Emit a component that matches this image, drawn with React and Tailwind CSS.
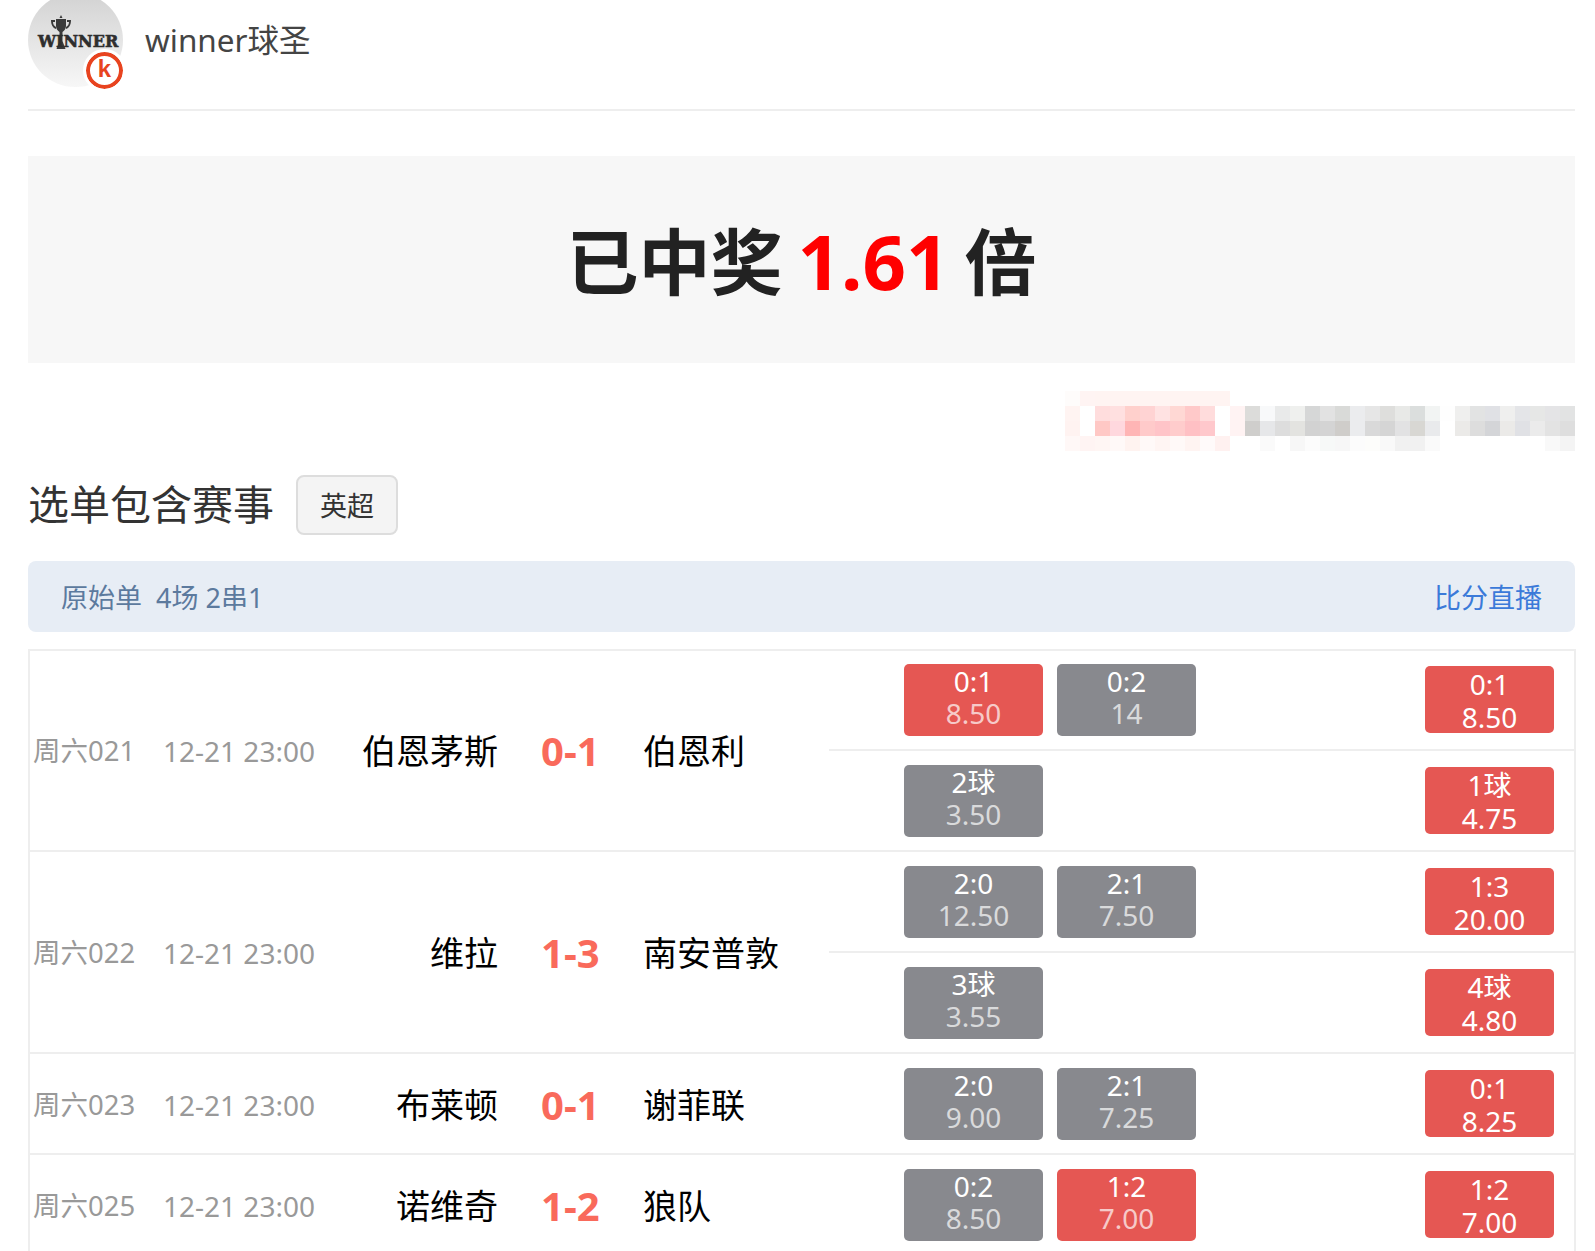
const SANS = "font-['Noto_Sans','Noto_Sans_CJK_SC',sans-serif]";

const MOSAIC = [
  ["#fefcfb","#fff4f3","#fff4f2","#fff4f2","#fff4f2","#fff4f2","#fff4f2","#fff4f2","#fff4f2","#fff4f2","#fff4f2"],
  ["#fff4f2","#fff","#ffdddd","#ffe0e0","#ffd0cc","#ffd3d3","#ffe2e2","#ffd8d4","#ffc9c9","#ffdcdc","#fff","#fff3f3","#dcdcda","#f8f9fa","#e9eaea","#eff0ee","#d6d7d7","#e2e2e2","#d9dad8","#ebecee","#e6e6e6","#dededc","#e8e9e7","#dbdedd","#f2f4f3","#fefefe","#efefee","#e2e3e3","#e0e1e5","#efefee","#e4e5e8","#e6e7e6","#e4e4e6","#e2e3e3"],
  ["#fff3f1","#fff","#ffc8c5","#ffd8de","#ffb5b5","#ffcaca","#ffc4c8","#ffcccc","#ffc0c4","#ffc8cc","#fff","#fff3f3","#cfcecc","#e6e7e9","#dddddd","#e3e3e0","#d2d2d2","#d4d4d4","#cfcdca","#ebecee","#d9d9d9","#d5d5d5","#e2e2e3","#d8d7d3","#e9eaec","#fff","#ebeae8","#dddddd","#d4d5d8","#ebeae8","#e0e1e5","#ebebeb","#e3e3e3","#dedede"],
  ["#fff8f7","#fff4f3","#fff6f4","#fff9f8","#fff3f0","#fff9f8","#fff5f3","#fff9f8","#fff4f2","#fffafa","#fff1f0","#fff","#fff","#fafafa","#fff","#f7f7f7","#fcfcfc","#f7f9f8","#f7f7f7","#fcfcfc","#fdfdfb","#f9f9f9","#f1f1f1","#f1f1f1","#fafafa","#fff","#fff","#fff","#fff","#fff","#fff","#fff","#f9f9f9","#f4f4f4"],
];

const MATCHES = [
  {
    date: "周六021", home: "伯恩茅斯", score: "0-1", away: "伯恩利",
    rows: [
      { opts: [["0:1", "8.50", true], ["0:2", "14", false]], pick: ["0:1", "8.50"] },
      { opts: [["2球", "3.50", false]], pick: ["1球", "4.75"] },
    ],
  },
  {
    date: "周六022", home: "维拉", score: "1-3", away: "南安普敦",
    rows: [
      { opts: [["2:0", "12.50", false], ["2:1", "7.50", false]], pick: ["1:3", "20.00"] },
      { opts: [["3球", "3.55", false]], pick: ["4球", "4.80"] },
    ],
  },
  {
    date: "周六023", home: "布莱顿", score: "0-1", away: "谢菲联",
    rows: [{ opts: [["2:0", "9.00", false], ["2:1", "7.25", false]], pick: ["0:1", "8.25"] }],
  },
  {
    date: "周六025", home: "诺维奇", score: "1-2", away: "狼队",
    rows: [{ opts: [["0:2", "8.50", false], ["1:2", "7.00", true]], pick: ["1:2", "7.00"] }],
  },
];

function Avatar() {
  return (
    <div className="relative -mt-[7px] h-[94px] w-[95px] shrink-0 rounded-full bg-gradient-to-b from-[#d2d2d2] to-[#f7f7f7]">
      <svg className="absolute left-[22px] top-[22px]" width="22" height="34" viewBox="0 0 22 34" fill="#3a3a3a">
        <path d="M11 0l1.500 3h-3zM6 4h10v7c0 3-2 5-3.500 6v9l3 8H6.500l3-8v-9C8 16 6 14 6 11z" />
        <path d="M5 5H1c0 5 2 8 5 9v-2c-2-1-3-3-3-5h2zM17 5h4c0 5-2 8-5 9v-2c2-1 3-3 3-5h-2z" />
      </svg>
      <span className="absolute left-[10px] top-[40px] font-['DejaVu_Serif',serif] text-[16px] font-bold leading-[18px] tracking-[0px] text-[#2e2e2e] [-webkit-text-stroke:0.6px_#2e2e2e]">
        WINNER
      </span>
      <div className="absolute left-[58px] top-[59px] flex h-[37px] w-[37px] items-center justify-center rounded-full border-[4px] border-[#e8431f] bg-white font-['Liberation_Sans',sans-serif] text-[24px] font-bold leading-none text-[#e8431f] outline-[3px] outline-white">
        <span className="-mt-[3px]">k</span>
      </div>
    </div>
  );
}

function Mosaic() {
  return (
    <svg width="510" height="60" viewBox="0 0 510 60" shapeRendering="crispEdges">
      {MOSAIC.map((row, r) =>
        row.map((c, i) => <rect key={`${r}-${i}`} x={i * 15} y={r * 15} width="15" height="15" fill={c} />)
      )}
    </svg>
  );
}

function Option({ top, bottom, on }) {
  return (
    <div className={`flex h-[72px] w-[139px] flex-col items-center justify-center rounded-[5px] pb-[6px] text-[28px] leading-[32px] ${on ? "bg-[#e55753]" : "bg-[#88898e]"}`}>
      <span className="text-white">{top}</span>
      <span className="text-white/70">{bottom}</span>
    </div>
  );
}

function Pick({ top, bottom }) {
  return (
    <div className="flex h-[67px] w-[129px] flex-col items-center justify-center rounded-[5px] bg-[#e55753] pt-[2px] text-[28px] leading-[33px] text-white">
      <span>{top}</span>
      <span>{bottom}</span>
    </div>
  );
}

function Match({ m }) {
  return (
    <div className="flex">
      <div className="flex w-[799px] shrink-0 items-center border-b-2 border-[#eeeeee] pl-[3px] text-[28px]">
        <span className="w-[130px] pt-[2px] text-[27.5px] text-[#999999]">{m.date}</span>
        <span className="w-[162px] pt-[2px] text-[#999999]">12-21 23:00</span>
        <span className="w-[173px] pt-[3px] text-right text-[34px] text-black">{m.home}</span>
        <span className="ml-[43px] w-[102px] pt-[2px] text-[40px] font-bold text-[#f96a5b]">{m.score}</span>
        <span className="pt-[3px] text-[34px] text-black">{m.away}</span>
      </div>
      <div className="flex-1">
        {m.rows.map((row, i) => (
          <div key={i} className="flex h-[101px] items-center justify-between border-b-2 border-[#eeeeee] pl-[75px] pr-[20px]">
            <div className="flex gap-[14px]">
              {row.opts.map((o) => (
                <Option key={o[0]} top={o[0]} bottom={o[1]} on={o[2]} />
              ))}
            </div>
            <Pick top={row.pick[0]} bottom={row.pick[1]} />
          </div>
        ))}
      </div>
    </div>
  );
}

export default function App() {
  return (
    <div className={`h-[1251px] w-[1595px] overflow-hidden bg-white pl-[28px] pr-[20px] ${SANS}`}>
      <header className="flex h-[111px] items-start gap-[22px] border-b-2 border-[#eeeeee]">
        <Avatar />
        <span className="mt-[16px] text-[31.5px] leading-[48px] text-[#444444]">winner球圣</span>
      </header>

      <section className="mt-[45px] flex h-[207px] items-center justify-center bg-[#f7f7f7] pt-[3px] text-[72px] font-bold text-[#222222]">
        已中奖<span className="mx-[15px] text-[76px] text-[#ff0000]">1.61</span>倍
      </section>

      <div className="mt-[28px] flex h-[60px] justify-end">
        <Mosaic />
      </div>

      <div className="mt-[24px] flex h-[59px] items-center gap-[22px]">
        <h2 className="text-[41px] font-normal text-[#333333]">选单包含赛事</h2>
        <span className="flex h-[60px] w-[102px] items-center justify-center rounded-lg border-2 border-[#dddddd] bg-[#f4f4f4] pt-[4px] text-[27px] text-[#333333]">
          英超
        </span>
      </div>

      <div className="mt-[27px] flex h-[71px] items-center justify-between rounded-lg bg-[#e7edf5] px-[33px] pt-[4px] text-[27px]">
        <span className="text-[#5c7a9e]">原始单&nbsp;&nbsp;4场 2串1</span>
        <span className="text-[#3b7ad9]">比分直播</span>
      </div>

      <div className="mt-[17px] -mr-[1px] border-x-2 border-t-2 border-[#eeeeee]">
        <div className="-mt-[1px]">
          {MATCHES.map((m) => (
            <Match key={m.date} m={m} />
          ))}
        </div>
      </div>
    </div>
  );
}
